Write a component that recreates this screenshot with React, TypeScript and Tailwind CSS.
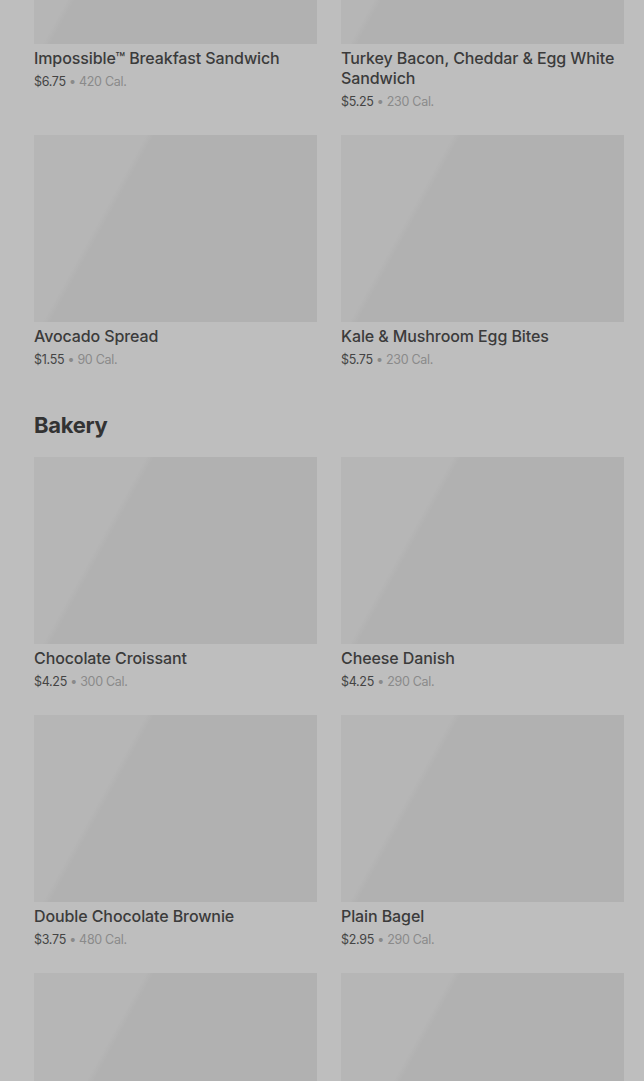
import React from "react";

type Item = { name: string; price: string; cal: string };

const breakfast: Item[] = [
  { name: "Impossible™ Breakfast Sandwich", price: "$6.75", cal: "420 Cal." },
  { name: "Turkey Bacon, Cheddar & Egg White Sandwich", price: "$5.25", cal: "230 Cal." },
  { name: "Avocado Spread", price: "$1.55", cal: "90 Cal." },
  { name: "Kale & Mushroom Egg Bites", price: "$5.75", cal: "230 Cal." },
];

const bakery: Item[] = [
  { name: "Chocolate Croissant", price: "$4.25", cal: "300 Cal." },
  { name: "Cheese Danish", price: "$4.25", cal: "290 Cal." },
  { name: "Double Chocolate Brownie", price: "$3.75", cal: "480 Cal." },
  { name: "Plain Bagel", price: "$2.95", cal: "290 Cal." },
  { name: "Butter Croissant", price: "$3.75", cal: "260 Cal." },
  { name: "Blueberry Muffin", price: "$3.45", cal: "360 Cal." },
];

function Card({ item }: { item: Item }) {
  return (
    <div className="flex flex-col">
      <div className="h-[187px] w-full bg-[linear-gradient(119deg,#b6b6b6_0%,#b6b6b6_29%,#b1b1b1_31%,#b1b1b1_100%)]" />
      <div className="mt-1 text-base leading-5 font-medium tracking-[-0.1px] text-[#3b3b3b]">{item.name}</div>
      <div className="mt-[5px] text-[12.5px] leading-[17px] tracking-[-0.3px]">
        <span className="text-[#444444]">{item.price}</span>
        <span className="text-[#8a8a8a]"> • {item.cal}</span>
      </div>
    </div>
  );
}

export default function App() {
  return (
    <div
      className="h-[1081px] w-full overflow-hidden bg-[#bebebe]"
      style={{ fontFamily: "Inter, 'Noto Sans', sans-serif" }}
    >
      <div className="mt-[-143px] pl-[34px] pr-[20px]">
        <div className="grid grid-cols-2 gap-x-6 gap-y-[25px]">
          {breakfast.map((it) => (
            <Card key={it.name} item={it} />
          ))}
        </div>
        <h2 className="mt-[43px] mb-[18px] text-[22px] leading-7 font-bold tracking-[-0.3px] text-[#333333]">Bakery</h2>
        <div className="grid grid-cols-2 gap-x-6 gap-y-[25px]">
          {bakery.map((it) => (
            <Card key={it.name} item={it} />
          ))}
        </div>
      </div>
    </div>
  );
}
